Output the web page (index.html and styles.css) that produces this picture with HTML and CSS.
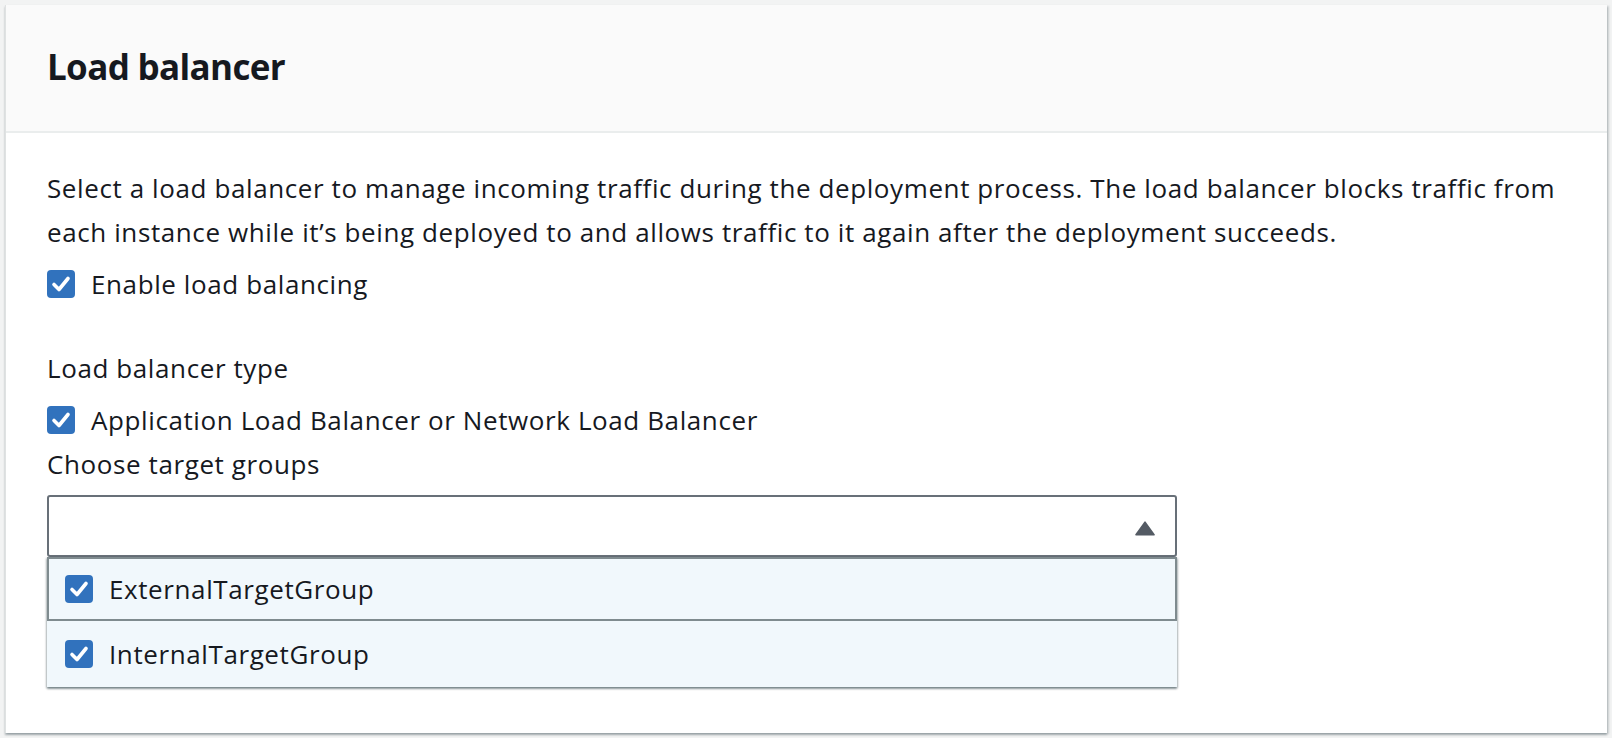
FILE: index.html
```html
<!DOCTYPE html>
<html lang="en">
<head>
<meta charset="utf-8">
<title>Load balancer</title>
<link rel="stylesheet" href="styles.css">
</head>
<body>
<section class="container">
  <header class="container-header">
    <h2 class="title">Load balancer</h2>
  </header>
  <div class="container-body">
    <p class="desc">Select a load balancer to manage incoming traffic during the deployment process. The load balancer blocks traffic from each instance while it’s being deployed to and allows traffic to it again after the deployment succeeds.</p>
    <label class="check-row row-enable">
      <span class="box"><svg viewBox="0 0 28 28" width="28" height="28"><polyline points="7,14.5 12,19.5 21,8.5" fill="none" stroke="#fff" stroke-width="3.6" stroke-linecap="round" stroke-linejoin="round"/></svg></span>
      <span class="check-text">Enable load balancing</span>
    </label>
    <div class="field-label type-label">Load balancer type</div>
    <label class="check-row row-app">
      <span class="box"><svg viewBox="0 0 28 28" width="28" height="28"><polyline points="7,14.5 12,19.5 21,8.5" fill="none" stroke="#fff" stroke-width="3.6" stroke-linecap="round" stroke-linejoin="round"/></svg></span>
      <span class="check-text">Application Load Balancer or Network Load Balancer</span>
    </label>
    <div class="field-label">Choose target groups</div>
    <div class="multiselect">
      <div class="select-trigger">
        <svg class="caret" viewBox="0 0 20 15" width="20" height="15"><path d="M10 1.2 L19 13.8 L1 13.8 Z" fill="#545b64" stroke="#545b64" stroke-width="1.6" stroke-linejoin="round"/></svg>
      </div>
      <ul class="options">
        <li class="option option-active">
          <span class="box"><svg viewBox="0 0 28 28" width="28" height="28"><polyline points="7,14.5 12,19.5 21,8.5" fill="none" stroke="#fff" stroke-width="3.6" stroke-linecap="round" stroke-linejoin="round"/></svg></span>
          <span class="check-text">ExternalTargetGroup</span>
        </li>
        <li class="option">
          <span class="box"><svg viewBox="0 0 28 28" width="28" height="28"><polyline points="7,14.5 12,19.5 21,8.5" fill="none" stroke="#fff" stroke-width="3.6" stroke-linecap="round" stroke-linejoin="round"/></svg></span>
          <span class="check-text">InternalTargetGroup</span>
        </li>
      </ul>
    </div>
  </div>
</section>
</body>
</html>
```
FILE: styles.css
```css
* { box-sizing: border-box; }
html, body { margin: 0; padding: 0; }
body {
  background: #f2f3f3;
  font-family: "Open Sans", "Noto Sans", Arial, sans-serif;
  color: #16191f;
  padding: 5px 5px 0 5px;
  height: 738px;
  overflow: hidden;
}
.container {
  background: #ffffff;
  height: 728px;
  border-left: 1px solid #dfe2e2;
  box-shadow: 0 2px 2px 0 rgba(0, 28, 36, 0.3), 2px 1px 2px 0 rgba(0, 28, 36, 0.15);
}
.container-header {
  height: 128px;
  background: #fafafa;
  border-bottom: 2px solid #eaeded;
  padding: 0 0 0 41px;
  display: flex;
  align-items: center;
}
.title {
  margin: 0;
  font-size: 35px;
  font-weight: 700;
  letter-spacing: -0.65px;
  line-height: 44px;
  position: relative;
  top: -1px;
}
.container-body {
  padding: 33px 36px 0 41px;
  font-size: 26px;
  letter-spacing: 0.6px;
  line-height: 44px;
}
.desc { margin: 0; }
.check-row {
  display: flex;
  align-items: center;
  gap: 16px;
}
.row-enable { margin-top: 8px; }
.box {
  width: 28px;
  height: 28px;
  border-radius: 4px;
  background: #3172bd;
  display: inline-flex;
  flex: none;
}
.box svg { display: block; }
.field-label { line-height: 44px; }
.type-label { margin-top: 40px; }
.row-app { margin-top: 8px; }
.multiselect {
  width: 1130px;
  margin-top: 9px;
}
.select-trigger {
  height: 62px;
  border: 2px solid #687078;
  border-radius: 3px;
  display: flex;
  align-items: center;
  justify-content: flex-end;
  padding-right: 20px;
}
.caret { display: block; margin-top: 4px; }
.options {
  list-style: none;
  margin: 0;
  padding: 0;
  background: #f1f8fc;
  box-shadow: 0 2px 2px rgba(0, 28, 36, 0.35), 1px 1px 2px rgba(0, 28, 36, 0.2), -1px 1px 2px rgba(0, 28, 36, 0.2);
}
.option {
  display: flex;
  align-items: center;
  gap: 16px;
  padding-left: 18px;
  height: 66px;
}
.option-active {
  height: 64px;
  border: 2px solid #7f8b8f;
  padding-left: 16px;
}
```
